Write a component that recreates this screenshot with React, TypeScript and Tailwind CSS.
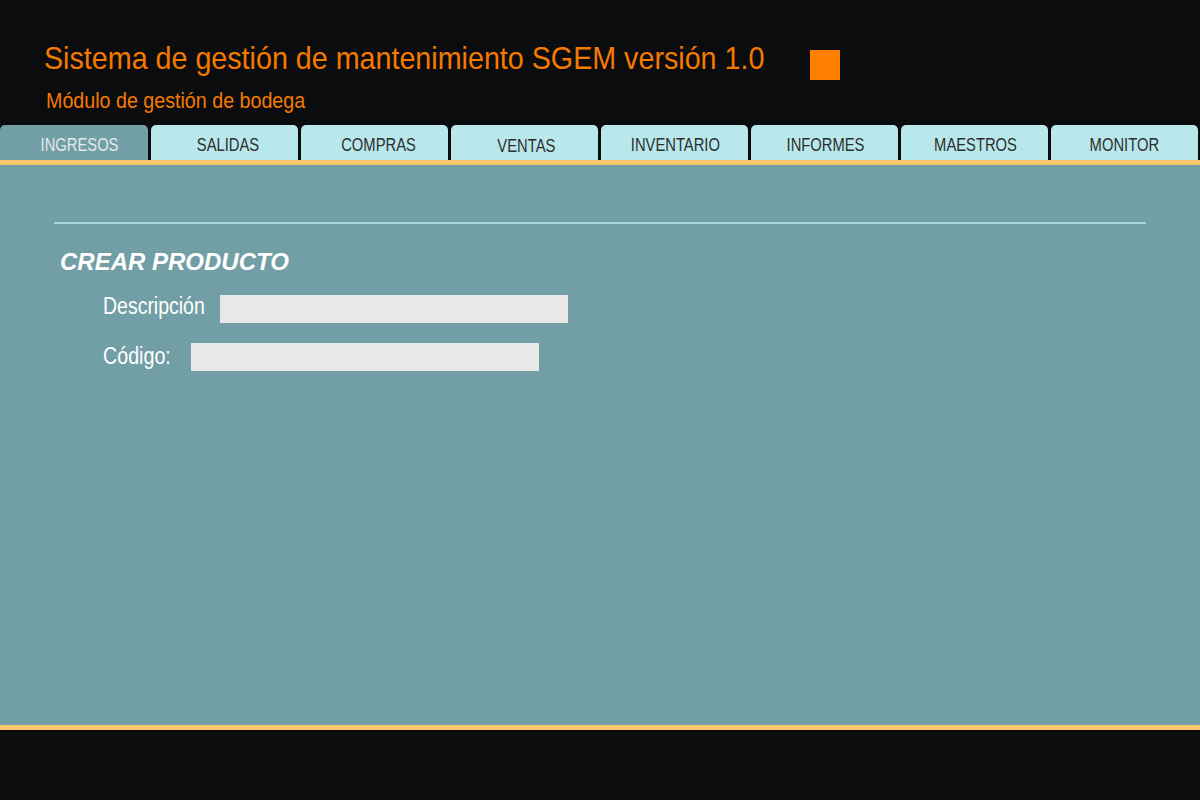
import type { ReactNode } from "react";

const TABS = [
  { label: "INGRESOS", pad: "w-[148px] pl-[12px]" },
  { label: "SALIDAS", pad: "w-[147px] pl-[8px]" },
  { label: "COMPRAS", pad: "w-[147px] pl-[8px]" },
  { label: "VENTAS", pad: "w-[147px] pl-[4px] pt-[8px]" },
  { label: "INVENTARIO", pad: "w-[147px] pl-[2px]" },
  { label: "INFORMES", pad: "w-[147px] pl-[3px]" },
  { label: "MAESTROS", pad: "w-[147px] pl-[2px]" },
  { label: "MONITOR", pad: "w-[147px]" },
];

// no Arial Narrow in the sandbox: squeeze Liberation Sans instead
function Narrow({ children, className }: { children: ReactNode; className: string }) {
  return <span className={`inline-block whitespace-nowrap ${className}`}>{children}</span>;
}

export default function App() {
  return (
    <div className="flex h-[800px] w-[1200px] flex-col bg-[#0b0c0e] font-['Liberation_Sans',Arial,sans-serif]">
      <header className="flex h-[125px] flex-col pl-[44px] pt-[39px]">
        <div className="flex items-start">
          <h1 className="w-[721px] text-[32px] leading-[38px] text-[#f57a00]">
            <Narrow className="origin-left scale-x-[0.896]">Sistema de gestión de mantenimiento SGEM versión 1.0</Narrow>
          </h1>
          <div className="ml-[45px] mt-[11px] h-[30px] w-[30px] bg-[#ff7f00]" />
        </div>
        <p className="ml-[2px] mt-[9px] text-[22px] leading-[24px] text-[#f57a00]">
          <Narrow className="origin-left scale-x-[0.894]">Módulo de gestión de bodega</Narrow>
        </p>
      </header>

      <nav className="flex h-[35px] gap-[3px]">
        {TABS.map((tab, i) => (
          <div
            key={tab.label}
            className={`flex items-center justify-center rounded-t-[5px] pt-[6px] text-[18px] ${tab.pad} ${
              i === 0 ? "bg-[#729ea6] text-[#e4eaec]" : "bg-[#b8e8ec] text-[#2e2e2e]"
            }`}
          >
            <Narrow className="origin-center scale-x-[0.82]">{tab.label}</Narrow>
          </div>
        ))}
      </nav>
      <div className="h-[5px] bg-[#f5c66a]" />

      <main className="h-[560px] bg-[#729ea6] px-[54px] pt-[57px]">
        <div className="h-[2px] bg-[#a9d5d9]" />
        <h2 className="ml-[6px] mt-[24px] text-[24px] font-bold italic leading-[28px] text-white">CREAR PRODUCTO</h2>
        <div className="ml-[49px] mt-[19px] flex items-start">
          <span className="-mt-[3px] w-[117px] text-[23px] leading-[28px] text-white">
            <Narrow className="origin-left scale-x-[0.847]">Descripción</Narrow>
          </span>
          <div className="h-[28px] w-[348px] bg-[#e8e8e8]" />
        </div>
        <div className="ml-[49px] mt-[20px] flex items-start">
          <span className="-mt-[1px] w-[88px] text-[23px] leading-[28px] text-white">
            <Narrow className="origin-left scale-x-[0.855]">Código:</Narrow>
          </span>
          <div className="h-[28px] w-[348px] bg-[#e8e8e8]" />
        </div>
      </main>
      <div className="h-[5px] bg-[#f5c66a]" />
    </div>
  );
}
